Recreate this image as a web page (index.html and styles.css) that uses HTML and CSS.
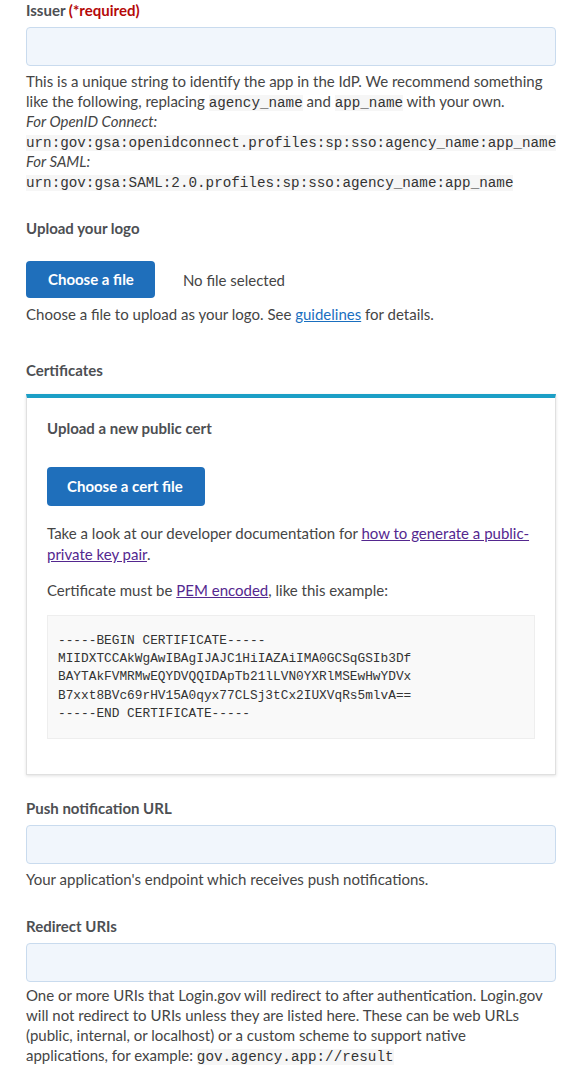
FILE: index.html
```html
<!DOCTYPE html>
<html>
<head>
    <meta charset="utf-8">
    <title>Service provider form</title>
    <link rel="stylesheet" href="styles.css">
</head>
<body>
    <form class="sp-form">
        <div class="field">
            <label class="label" for="issuer">Issuer <span class="required">(*required)</span></label>
            <input class="text-input" id="issuer" type="text">
            <div class="hint">
                This is a unique string to identify the app in the IdP. We recommend something
                like the following, replacing <code>agency_name</code> and <code>app_name</code> with your own.<br>
                <em>For OpenID Connect:</em><br>
                <code>urn:gov:gsa:openidconnect.profiles:sp:sso:agency_name:app_name</code><br>
                <em>For SAML:</em><br>
                <code>urn:gov:gsa:SAML:2.0.profiles:sp:sso:agency_name:app_name</code>
            </div>
        </div>

        <div class="field field-logo">
            <div class="label">Upload your logo</div>
            <div class="file-row">
                <span class="button">Choose a file</span>
                <span class="file-name">No file selected</span>
            </div>
            <div class="hint hint-file">Choose a file to upload as your logo. See <a href="#">guidelines</a> for details.</div>
        </div>

        <div class="field field-certs">
            <div class="label">Certificates</div>
            <div class="card">
                <div class="label">Upload a new public cert</div>
                <span class="button button-cert">Choose a cert file</span>
                <p class="card-text first">Take a look at our developer documentation for <a class="visited" href="#">how to generate a public-private key pair</a>.</p>
                <p class="card-text">Certificate must be <a class="visited" href="#">PEM encoded</a>, like this example:</p>
                <pre class="cert">-----BEGIN CERTIFICATE-----
MIIDXTCCAkWgAwIBAgIJAJC1HiIAZAiIMA0GCSqGSIb3Df
BAYTAkFVMRMwEQYDVQQIDApTb21lLVN0YXRlMSEwHwYDVx
B7xxt8BVc69rHV15A0qyx77CLSj3tCx2IUXVqRs5mlvA==
-----END CERTIFICATE-----</pre>
            </div>
        </div>

        <div class="field">
            <label class="label" for="push">Push notification URL</label>
            <input class="text-input" id="push" type="text">
            <div class="hint">Your application's endpoint which receives push notifications.</div>
        </div>

        <div class="field">
            <label class="label" for="redirect">Redirect URIs</label>
            <input class="text-input" id="redirect" type="text">
            <div class="hint hint-tight">
                One or more URIs that Login.gov will redirect to after authentication. Login.gov
                will not redirect to URIs unless they are listed here. These can be web URLs
                (public, internal, or localhost) or a custom scheme to support native<br>
                applications, for example: <code>gov.agency.app://result</code>
            </div>
        </div>
    </form>
</body>
</html>
```

FILE: styles.css
```css
body
{
    margin: 0;
    background: #fff;
    color: #454545;
    font-family: Lato, "Noto Sans", sans-serif;
    font-size: 15px;
    line-height: 20px;
}

.sp-form
{
    width: 530px;
    padding-left: 26px;
}

.field
{
    margin-bottom: 27px;
}

.field-logo
{
    margin-bottom: 36px;
}

.field-certs
{
    margin-bottom: 23px;
}

.label
{
    display: block;
    font-weight: bold;
    color: #4d4f53;
    line-height: 20px;
}

.required
{
    color: #b50909;
}

.text-input
{
    display: block;
    box-sizing: border-box;
    width: 100%;
    height: 39px;
    margin: 7px 0 5px;
    border: 1px solid #c9dbee;
    border-radius: 4px;
    background: #f1f6fc;
}

.hint
{
    line-height: 20px;
}

.hint-file
{
    margin-top: 6px;
}

.hint-tight
{
    margin-top: -2px;
}

code
{
    font-family: "Liberation Mono", "DejaVu Sans Mono", monospace;
    font-size: 14.25px;
    line-height: 1;
    background: #f6f6f6;
    color: #333;
}

a
{
    color: #1a6fbf;
}

a.visited
{
    color: #54278f;
}

.file-row
{
    display: flex;
    align-items: center;
    margin-top: 23px;
}

.button
{
    display: inline-block;
    box-sizing: border-box;
    height: 37px;
    padding: 0 21px 0 22px;
    border-radius: 4px;
    background: #1f6fbb;
    color: #fff;
    font-weight: bold;
    line-height: 37px;
}

.file-name
{
    margin-left: 28px;
}

.card
{
    margin-top: 14px;
    padding: 20px 20px 35px;
    border: 1px solid #e0e0e0;
    border-top: 4px solid #1c9fc6;
    box-shadow: 0 1px 3px rgba(0, 0, 0, 0.12);
}

.button-cert
{
    height: 39px;
    padding: 0 22px 0 20px;
    line-height: 39px;
    margin-top: 29px;
}

.card-text
{
    margin: 15px 0 0;
    line-height: 21px;
}

.card-text.first
{
    margin-top: 17px;
}

.cert
{
    margin: 14px 0 0;
    padding: 16px 10px 15px;
    border: 1px solid #eee;
    background: #f9f9f9;
    color: #333;
    font-family: "Liberation Mono", "DejaVu Sans Mono", monospace;
    font-size: 12.8px;
    line-height: 18.2px;
}
```
